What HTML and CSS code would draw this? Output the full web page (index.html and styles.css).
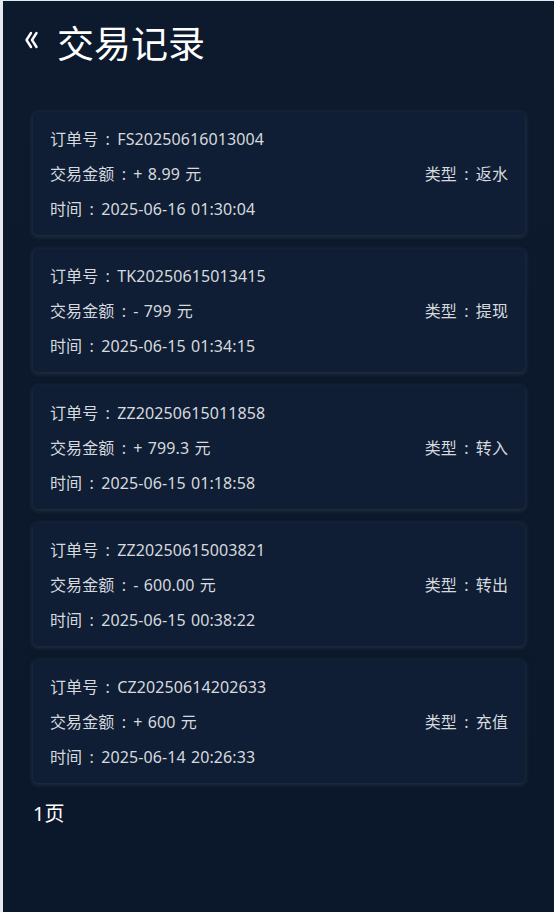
FILE: index.html
```html
<!DOCTYPE html>
<html lang="zh-CN">
<head>
<meta charset="utf-8">
<title>交易记录</title>
<link rel="stylesheet" href="styles.css">
</head>
<body>
<div class="page">
  <header class="header">
    <svg class="back" width="16" height="20" viewBox="0 0 16 20" aria-hidden="true">
      <path d="M8 3 L3.5 10 L8 17 M13.5 3 L9 10 L13.5 17" fill="none" stroke="#ffffff" stroke-width="2.4" stroke-linecap="round" stroke-linejoin="round"/>
    </svg>
    <h1 class="title">交易记录</h1>
  </header>
  <main class="list">
    <div class="card">
      <div class="row">订单号<span class="sep"> : </span>FS20250616013004</div>
      <div class="row split"><span>交易金额<span class="sep"> : </span>+ 8.99 元</span><span>类型<span class="sep"> : </span>返水</span></div>
      <div class="row">时间<span class="sep"> : </span>2025-06-16 01:30:04</div>
    </div>
    <div class="card">
      <div class="row">订单号<span class="sep"> : </span>TK20250615013415</div>
      <div class="row split"><span>交易金额<span class="sep"> : </span>- 799 元</span><span>类型<span class="sep"> : </span>提现</span></div>
      <div class="row">时间<span class="sep"> : </span>2025-06-15 01:34:15</div>
    </div>
    <div class="card">
      <div class="row">订单号<span class="sep"> : </span>ZZ20250615011858</div>
      <div class="row split"><span>交易金额<span class="sep"> : </span>+ 799.3 元</span><span>类型<span class="sep"> : </span>转入</span></div>
      <div class="row">时间<span class="sep"> : </span>2025-06-15 01:18:58</div>
    </div>
    <div class="card">
      <div class="row">订单号<span class="sep"> : </span>ZZ20250615003821</div>
      <div class="row split"><span>交易金额<span class="sep"> : </span>- 600.00 元</span><span>类型<span class="sep"> : </span>转出</span></div>
      <div class="row">时间<span class="sep"> : </span>2025-06-15 00:38:22</div>
    </div>
    <div class="card">
      <div class="row">订单号<span class="sep"> : </span>CZ20250614202633</div>
      <div class="row split"><span>交易金额<span class="sep"> : </span>+ 600 元</span><span>类型<span class="sep"> : </span>充值</span></div>
      <div class="row">时间<span class="sep"> : </span>2025-06-14 20:26:33</div>
    </div>
    <div class="pager">1页</div>
  </main>
</div>
</body>
</html>
```
FILE: styles.css
```css
html, body {
  margin: 0;
  padding: 0;
}
body {
  background: #e6e9ee;
  font-family: "Noto Sans", "Noto Sans CJK SC", sans-serif;
}
.page {
  margin: 1px 0 0 3px;
  min-height: 911px;
  background: linear-gradient(#0d1a2e, #0b172a);
  box-sizing: border-box;
}
.header {
  height: 90px;
  display: flex;
  align-items: center;
  padding: 0 0 8px 20px;
  box-sizing: border-box;
}
.back {
  margin-top: -4px;
  margin-right: 18px;
}
.title {
  margin: 0;
  font-size: 37px;
  font-weight: 400;
  color: #ffffff;
  line-height: 1;
  font-family: "Noto Sans CJK SC", sans-serif;
}
.list {
  padding: 21px 29px 0 30px;
  display: flex;
  flex-direction: column;
  gap: 14px;
}
.card {
  background: #0f1e34;
  border-radius: 5px;
  padding: 10px 17px 8px;
  box-shadow: 0 1px 4px 1px rgba(60, 70, 85, 0.5);
}
.row {
  font-size: 16px;
  line-height: 35px;
  color: #d6d9de;
  white-space: nowrap;
  word-spacing: 1px;
  letter-spacing: 0.1px;
}
.sep {
  word-spacing: 3px;
}
.split {
  display: flex;
  justify-content: space-between;
}
.pager {
  font-size: 20px;
  color: #ffffff;
  line-height: 28px;
  margin-top: 3px;
  font-family: "Noto Sans", "Noto Sans CJK SC", sans-serif;
}
```
